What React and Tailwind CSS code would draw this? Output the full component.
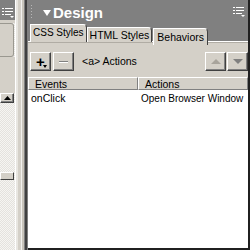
import React from 'react'

const font = { fontFamily: '"Liberation Sans", Arial, sans-serif' }

const MenuIcon = ({ className }) => (
  <svg width="12" height="11" viewBox="0 0 12 11" className={className}>
    <rect x="0" y="0" width="2" height="1" fill="#fff" />
    <rect x="3" y="0" width="8" height="1" fill="#fff" />
    <rect x="0" y="3" width="2" height="1" fill="#fff" />
    <rect x="3" y="3" width="8" height="1" fill="#fff" />
    <rect x="0" y="6" width="2" height="1" fill="#fff" />
    <rect x="3" y="6" width="6" height="1" fill="#fff" />
    <path d="M8 8 L12 8 L10 10 Z" fill="#fff" />
  </svg>
)

const Raised = ({ className = '', children }) => (
  <div
    className={`flex items-center justify-center bg-[#d4d0c8] border border-t-white border-l-white border-r-[#404040] border-b-[#404040] shadow-[inset_-1px_-1px_0_#808080] ${className}`}
  >
    {children}
  </div>
)

export default function App() {
  return (
    <div className="w-[250px] h-[250px] flex bg-[#d4d0c8] overflow-hidden" style={font}>
      {/* left docked panel, cut off */}
      <div className="w-[15px] h-full flex flex-col bg-[repeating-conic-gradient(#e4e2de_0_25%,#f6f5f2_0_50%)] bg-[length:2px_2px]">
        <div className="h-[20px] bg-[#808080] flex items-start pt-[8px] pl-[2px]">
          <MenuIcon />
        </div>
        <div className="h-[3px] bg-[#d4d0c8]" />
        <div className="h-[34px] bg-[#d4d0c8] border border-l-0 border-[#9a9890] rounded-r-[3px] mr-[1px]" />
        <div className="h-[36px] bg-[#d4d0c8]" />
        <Raised className="h-[10px] w-[14px]">
          <svg width="7" height="4" viewBox="0 0 7 4">
            <path d="M0 4 L3.5 0 L7 4 Z" fill="#000" />
          </svg>
        </Raised>
        <div className="h-[69px]" />
        <div className="h-[8px] w-[14px] bg-[#d4d0c8] border border-t-white border-l-white border-r-[#404040] border-b-[#404040]" />
      </div>

      {/* splitter */}
      <div className="w-[13px] h-full flex">
        <div className="w-[1px] bg-white" />
        <div className="w-[2px] bg-[#e8e6e1]" />
        <div className="w-[3px] bg-[#d4d0c8]" />
        <div className="w-[1px] bg-[#f2f1ee]" />
        <div className="w-[2px] bg-[#c8c4bb]" />
        <div className="w-[1px] bg-[#808080]" />
        <div className="w-[2px] bg-[#404040]" />
        <div className="w-[1px] bg-[#808080]" />
      </div>

      {/* Design panel */}
      <div className="flex-1 flex flex-col border-r-2 border-b-2 border-[#202020] min-w-0">
        {/* title bar */}
        <div className="h-[24px] bg-[#808080] flex items-center pl-[2px] pr-[3px]">
          <div className="w-[4px] h-[16px] bg-[radial-gradient(circle,#b8b8b8_1px,transparent_1px)] bg-[length:3px_3px]" />
          <svg width="8" height="6" viewBox="0 0 8 6" className="ml-[9px] mt-[1px]">
            <path d="M0 0 L8 0 L4 6 Z" fill="#fff" />
          </svg>
          <span className="ml-[2px] text-white font-bold text-[15px] leading-none">Design</span>
          <MenuIcon className="ml-auto" />
        </div>

        {/* tabs */}
        <div className="h-[21px] flex items-end pl-[2px] whitespace-nowrap bg-[linear-gradient(to_bottom,#808080_17px,#fff_17px,#fff_18px,#b0aca4_18px,#b0aca4_19px,#d4d0c8_19px)]">
          <div className="h-[18px] mb-[3px] px-[2px] bg-[#d4d0c8] border border-b-0 border-t-white border-l-white border-r-[#404040] rounded-tr-[4px] text-[10px] leading-[15px] text-black">
            CSS Styles
          </div>
          <div className="h-[15px] mb-[3px] px-[2px] bg-[#d4d0c8] border border-b-0 border-t-white border-l-white border-r-[#404040] rounded-tr-[4px] text-[10.5px] leading-[15px] text-black">
            HTML Styles
          </div>
          <div className="h-[17px] ml-[1px] px-[3px] bg-[#d4d0c8] border border-b-0 border-t-white border-l-white border-r-[#404040] rounded-tr-[4px] text-[10.5px] leading-[17px] text-black">
            Behaviors
          </div>
        </div>

        {/* toolbar */}
        <div className="h-[32px] flex items-center pl-[2px] pt-[1px]">
          <Raised className="w-[21px] h-[19px] relative">
            <span className="text-[15px] font-bold leading-none -mt-[1px]">+</span>
            <svg width="4" height="3" viewBox="0 0 4 3" className="absolute right-[3px] bottom-[2px]">
              <path d="M0 0 L4 0 L2 3 Z" fill="#000" />
            </svg>
          </Raised>
          <Raised className="w-[21px] h-[19px] ml-[2px]">
            <div className="w-[9px] h-[1px] bg-[#808080] shadow-[0_1px_0_#fff]" />
          </Raised>
          <span className="ml-[8px] text-[10.5px] text-black whitespace-nowrap">&lt;a&gt; Actions</span>
          <Raised className="w-[21px] h-[19px] ml-auto">
            <svg width="10" height="5" viewBox="0 0 10 5">
              <path d="M0 5 L5 0 L10 5 Z" fill="#a8a49c" />
            </svg>
          </Raised>
          <Raised className="w-[21px] h-[19px] ml-[1px]">
            <svg width="10" height="5" viewBox="0 0 10 5">
              <path d="M0 0 L10 0 L5 5 Z" fill="#808080" />
            </svg>
          </Raised>
        </div>

        {/* column headers */}
        <div className="h-[13px] flex text-[10.5px] leading-[12px] text-black">
          <div className="w-[110px] pl-[6px] border border-t-white border-l-white border-r-[#808080] border-b-[#808080]">Events</div>
          <div className="flex-1 pl-[6px] border border-t-white border-l-white border-r-[#808080] border-b-[#808080]">Actions</div>
        </div>

        {/* list */}
        <div className="flex-1 bg-white text-[10.5px] text-black">
          <div className="flex h-[16px] items-center pt-[1px] whitespace-nowrap">
            <div className="w-[113px] shrink-0 pl-[3px]">onClick</div>
            <div className="text-[10px]">Open Browser Window</div>
          </div>
        </div>
      </div>
    </div>
  )
}
